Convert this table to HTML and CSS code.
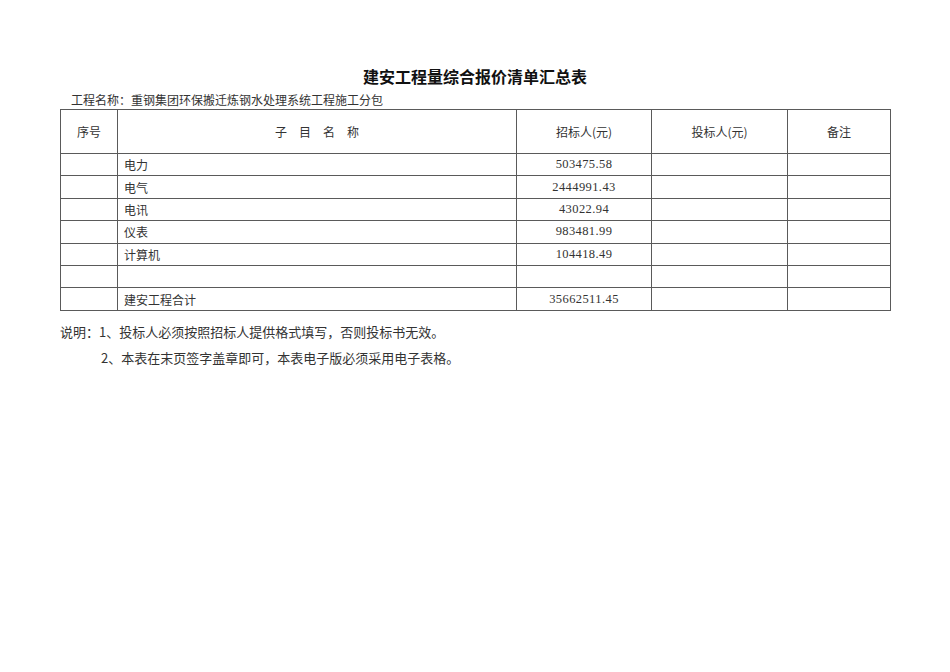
FILE: index.html
```html
<!DOCTYPE html>
<html lang="zh">
<head>
<meta charset="utf-8">
<link rel="stylesheet" href="styles.css">
</head>
<body>
<div class="page">
  <h1 class="title">建安工程量综合报价清单汇总表</h1>
  <div class="project">工程名称：重钢集团环保搬迁炼钢水处理系统工程施工分包</div>
  <table class="sheet">
    <colgroup>
      <col class="c1"><col class="c2"><col class="c3"><col class="c4"><col class="c5">
    </colgroup>
    <thead>
      <tr>
        <th>序号</th>
        <th class="spaced">子目名称</th>
        <th>招标人(元)</th>
        <th>投标人(元)</th>
        <th>备注</th>
      </tr>
    </thead>
    <tbody>
      <tr><td></td><td class="name">电力</td><td class="num">503475.58</td><td></td><td></td></tr>
      <tr><td></td><td class="name">电气</td><td class="num">2444991.43</td><td></td><td></td></tr>
      <tr><td></td><td class="name">电讯</td><td class="num">43022.94</td><td></td><td></td></tr>
      <tr><td></td><td class="name">仪表</td><td class="num">983481.99</td><td></td><td></td></tr>
      <tr><td></td><td class="name">计算机</td><td class="num">104418.49</td><td></td><td></td></tr>
      <tr><td></td><td class="name"></td><td class="num"></td><td></td><td></td></tr>
      <tr><td></td><td class="name">建安工程合计</td><td class="num">35662511.45</td><td></td><td></td></tr>
    </tbody>
  </table>
  <div class="notes">
    <p class="note">说明：1、投标人必须按照招标人提供格式填写，否则投标书无效。</p>
    <p class="note indent">2、本表在末页签字盖章即可，本表电子版必须采用电子表格。</p>
  </div>
</div>
</body>
</html>
```
FILE: styles.css
```css
html, body {
  margin: 0;
  padding: 0;
  background: #ffffff;
}
body {
  font-family: "Noto Sans CJK SC", "Noto Sans", sans-serif;
  color: #222;
}
.page {
  width: 830px;
  margin-left: 60px;
  padding-top: 64px;
}
.title {
  margin: 0;
  font-size: 16px;
  line-height: 24px;
  font-weight: bold;
  text-align: center;
  color: #111;
}
.project {
  margin-top: 3px;
  padding-left: 11px;
  font-size: 12px;
  line-height: 18px;
  color: #333;
}
.sheet {
  width: 830px;
  border-collapse: collapse;
  table-layout: fixed;
  font-size: 12px;
  color: #333;
}
.c1 { width: 57px; }
.c2 { width: 399px; }
.c3 { width: 135px; }
.c4 { width: 136px; }
.c5 { width: 103px; }
.sheet th, .sheet td {
  border: 1px solid #5a5a5a;
  padding: 0;
}
.sheet th {
  height: 43px;
  font-weight: normal;
  text-align: center;
}
.sheet th.spaced {
  letter-spacing: 12px;
  padding-left: 12px;
}
.sheet td {
  height: 21.4px;
}
.sheet td.name {
  padding-left: 6px;
}
.sheet td.num {
  text-align: center;
  font-family: "Liberation Serif", serif;
  font-size: 12.5px;
  letter-spacing: 0.4px;
}
.notes {
  margin-top: 8px;
}
.note {
  margin: 0;
  font-size: 13px;
  line-height: 26px;
  color: #333;
}
.note.indent {
  padding-left: 41px;
}
```
